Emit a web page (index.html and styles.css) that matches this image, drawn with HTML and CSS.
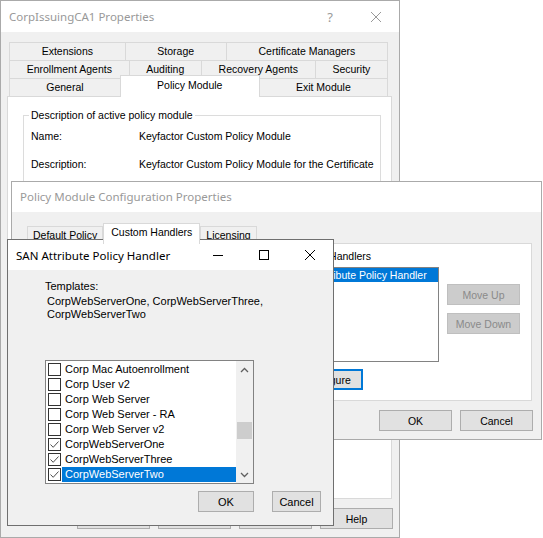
FILE: index.html
```html
<!DOCTYPE html>
<html lang="en">
<head>
  <meta charset="UTF-8">
  <title>Policy Module Configuration</title>
  <link rel="stylesheet" href="styles.css">
</head>
<body>
  <div class="desktop">

    <!-- CA properties sheet (inactive, at the back) -->
    <section class="win win-props">
      <div class="titlebar">
        <span class="title">CorpIssuingCA1 Properties</span>
        <div class="caption">
          <span class="cap-btn cap-help">?</span>
          <span class="cap-btn">
            <svg viewBox="0 0 10 10"><path d="M0 0L10 10M10 0L0 10"/></svg>
          </span>
        </div>
      </div>
      <div class="win-body">
        <div class="tab-stack">
          <div class="tab-row">
            <div class="tab">Extensions</div>
            <div class="tab">Storage</div>
            <div class="tab">Certificate Managers</div>
          </div>
          <div class="tab-row">
            <div class="tab">Enrollment Agents</div>
            <div class="tab">Auditing</div>
            <div class="tab">Recovery Agents</div>
            <div class="tab">Security</div>
          </div>
          <div class="tab-row">
            <div class="tab">General</div>
            <div class="tab selected">Policy Module</div>
            <div class="tab">Exit Module</div>
          </div>
        </div>
        <div class="tab-panel props-panel">
          <fieldset class="group">
            <legend>Description of active policy module</legend>
            <div class="desc-grid">
              <span>Name:</span>
              <span class="desc-value">Keyfactor Custom Policy Module</span>
              <span>Description:</span>
              <span class="desc-value">Keyfactor Custom Policy Module for the Certificate</span>
            </div>
          </fieldset>
        </div>
        <div class="dlg-buttons">
          <button class="btn">OK</button>
          <button class="btn">Cancel</button>
          <button class="btn">Apply</button>
          <button class="btn">Help</button>
        </div>
      </div>
    </section>

    <!-- Policy module configuration (inactive, middle) -->
    <section class="win win-config">
      <div class="titlebar">
        <span class="title">Policy Module Configuration Properties</span>
      </div>
      <div class="win-body">
        <div class="tab-strip">
          <div class="tab">Default Policy</div>
          <div class="tab selected">Custom Handlers</div>
          <div class="tab">Licensing</div>
        </div>
        <div class="tab-panel config-panel">
          <div class="handlers">
            <div class="handlers-col">
              <span class="handlers-label">Custom Handlers</span>
              <div class="listbox handler-list">
                <div class="list-row selected">SAN Attribute Policy Handler</div>
              </div>
              <button class="btn btn-default">Configure</button>
            </div>
            <div class="move-col">
              <button class="btn" disabled>Move Up</button>
              <button class="btn" disabled>Move Down</button>
            </div>
          </div>
        </div>
        <div class="dlg-buttons">
          <button class="btn">OK</button>
          <button class="btn">Cancel</button>
        </div>
      </div>
    </section>

    <!-- SAN handler (active, in front) -->
    <section class="win win-san">
      <div class="titlebar">
        <span class="title">SAN Attribute Policy Handler</span>
        <div class="caption">
          <span class="cap-btn">
            <svg viewBox="0 0 10 10"><path d="M0 5.5H10"/></svg>
          </span>
          <span class="cap-btn">
            <svg viewBox="0 0 10 10"><rect x="0.5" y="0.5" width="9" height="9"/></svg>
          </span>
          <span class="cap-btn">
            <svg viewBox="0 0 10 10"><path d="M0 0L10 10M10 0L0 10"/></svg>
          </span>
        </div>
      </div>
      <div class="win-body">
        <div class="templates">
          <div>Templates:</div>
          <div class="template-names">CorpWebServerOne, CorpWebServerThree,<br>CorpWebServerTwo</div>
        </div>
        <div class="listbox check-list">
          <div class="check-items">
            <div class="check-item"><span class="check-box"></span><span class="check-label">Corp Mac Autoenrollment</span></div>
            <div class="check-item"><span class="check-box"></span><span class="check-label">Corp User v2</span></div>
            <div class="check-item"><span class="check-box"></span><span class="check-label">Corp Web Server</span></div>
            <div class="check-item"><span class="check-box"></span><span class="check-label">Corp Web Server - RA</span></div>
            <div class="check-item"><span class="check-box"></span><span class="check-label">Corp Web Server v2</span></div>
            <div class="check-item checked"><span class="check-box"><svg viewBox="0 0 11 11"><path d="M1.5 5.5L4.2 8.3L9.5 2.5"/></svg></span><span class="check-label">CorpWebServerOne</span></div>
            <div class="check-item checked"><span class="check-box"><svg viewBox="0 0 11 11"><path d="M1.5 5.5L4.2 8.3L9.5 2.5"/></svg></span><span class="check-label">CorpWebServerThree</span></div>
            <div class="check-item checked selected"><span class="check-box"><svg viewBox="0 0 11 11"><path d="M1.5 5.5L4.2 8.3L9.5 2.5"/></svg></span><span class="check-label">CorpWebServerTwo</span></div>
          </div>
          <div class="scrollbar">
            <span class="arrow"><svg viewBox="0 0 9 6"><path d="M1 5L4.5 1.5L8 5"/></svg></span>
            <div class="track"><span class="thumb"></span></div>
            <span class="arrow"><svg viewBox="0 0 9 6"><path d="M1 1L4.5 4.5L8 1"/></svg></span>
          </div>
        </div>
        <div class="san-buttons">
          <button class="btn btn-ok">OK</button>
          <button class="btn btn-cancel">Cancel</button>
        </div>
      </div>
    </section>

  </div>
</body>
</html>
```

FILE: styles.css
```css
/* General */
* {
  box-sizing: border-box;
}

body {
  margin: 0;
  background: #fff;
  font-family: 'Liberation Sans', Arial, sans-serif;
  font-size: 10.5px;
  color: #000;
}

.desktop {
  position: relative;
  width: 543px;
  height: 538px;
  overflow: hidden;
}

/* Windows */
.win {
  position: absolute;
  display: flex;
  flex-direction: column;
  background: #f0f0f0;
  border: 1px solid #aaaaaa;
}

.win-props {
  left: 0;
  top: 0;
  width: 400px;
  height: 538px;
}

.win-config {
  left: 11px;
  top: 181px;
  width: 531px;
  height: 259px;
}

.win-san {
  left: 7px;
  top: 239px;
  width: 327px;
  height: 287px;
  border-color: #6f6f6f;
  font-size: 11px;
}

.titlebar {
  display: flex;
  align-items: center;
  flex: none;
  height: 30px;
  background: #fff;
}

.win-props .titlebar {
  height: 31px;
}

.title {
  flex: 1;
  padding-left: 8px;
  font-family: 'Noto Sans', sans-serif;
  font-size: 11.5px;
  color: #999;
  white-space: nowrap;
}

.win-config .title {
  padding-bottom: 2px;
}

.win-san .title {
  color: #000;
}

.caption {
  display: flex;
  align-self: stretch;
}

.cap-btn {
  display: flex;
  align-items: center;
  justify-content: center;
  width: 46px;
  color: #000;
}

.win-props .cap-btn {
  color: #999;
}

.cap-help {
  font-family: 'Noto Sans', sans-serif;
  font-size: 13px;
}

.cap-btn svg {
  width: 10px;
  height: 10px;
  fill: none;
  stroke: currentColor;
  stroke-width: 1;
}

.win-body {
  flex: 1;
}

/* Tabs */
.tab {
  background: #f0f0f0;
  border: 1px solid #d9d9d9;
  border-bottom: none;
  text-align: center;
  white-space: nowrap;
}

.tab.selected {
  position: relative;
  z-index: 1;
  background: #fff;
  margin-bottom: -1px;
}

.tab-panel {
  background: #fff;
  border: 1px solid #d9d9d9;
}

/* Buttons */
.btn {
  height: 21px;
  width: 73px;
  padding: 0;
  background: #e1e1e1;
  border: 1px solid #adadad;
  font: inherit;
  color: #000;
  text-align: center;
}

.btn:disabled {
  background: #cccccc;
  border-color: #bfbfbf;
  color: #8a8a8a;
}

.btn-default {
  border-color: #0078d7;
  box-shadow: inset 0 0 0 1px #0078d7;
}

.dlg-buttons {
  display: flex;
  justify-content: flex-end;
  gap: 8px;
  margin-top: 9px;
}

/* CA properties sheet */
.win-props .win-body {
  padding: 10px 6px 0 6px;
}

.tab-stack {
  width: 379px;
  margin-left: 2px;
}

.tab-row {
  display: flex;
  align-items: flex-end;
  height: 18px;
}

.tab-row .tab {
  flex: 1 1 auto;
  height: 18px;
  margin-left: -1px;
  padding: 0 4px;
  line-height: 17px;
}

.tab-row .tab:first-child {
  margin-left: 0;
}

.tab-row .tab.selected {
  height: 22px;
  line-height: 19px;
}

.props-panel {
  width: 385px;
  height: 403px;
}

.group {
  width: 356px;
  height: 160px;
  margin: 12px 0 0 15px;
  padding: 8px 6px 0 7px;
  border: 1px solid #dcdcdc;
}

.group legend {
  margin-left: -2px;
  padding: 0 2px;
  line-height: 13px;
}

.desc-grid {
  display: grid;
  grid-template-columns: 108px 1fr;
  row-gap: 15px;
  line-height: 13px;
}

.desc-value {
  white-space: nowrap;
}

/* Configuration properties */
.win-config .win-body {
  padding: 12px 8px 0 11px;
}

.tab-strip {
  display: flex;
  align-items: flex-end;
  height: 19px;
  margin-left: 4px;
}

.tab-strip .tab {
  height: 17px;
  padding: 0 5px;
  line-height: 16px;
}

.tab-strip .tab.selected {
  height: 21px;
  padding: 0 7px;
  line-height: 17px;
}

.config-panel {
  width: 509px;
  height: 158px;
}

.handlers {
  display: flex;
  gap: 8px;
  padding: 6px 0 0 266px;
}

.handlers-col {
  display: flex;
  flex-direction: column;
  width: 149px;
}

.handlers-label {
  line-height: 13px;
}

.listbox {
  background: #fff;
  border: 1px solid #828282;
}

.handler-list {
  height: 95px;
  margin-top: 4px;
}

.list-row {
  height: 14px;
  padding-left: 2px;
  line-height: 14px;
  white-space: nowrap;
}

.selected > .check-label,
.list-row.selected {
  background: #0078d7;
  color: #fff;
}

.handlers-col .btn {
  width: 70px;
  margin: 7px 0 0 3px;
}

.move-col {
  display: flex;
  flex-direction: column;
  gap: 8px;
  margin-top: 34px;
}

/* SAN handler */
.win-san .win-body {
  padding: 10px 12px 0 37px;
}

.templates {
  line-height: 13px;
}

.template-names {
  margin-top: 2px;
  padding-left: 2px;
}

.check-list {
  display: flex;
  width: 209px;
  height: 124px;
  margin-top: 39px;
}

.check-items {
  flex: 1;
  padding-top: 1px;
}

.check-item {
  display: flex;
  align-items: center;
  height: 15px;
}

.check-box {
  display: flex;
  align-items: center;
  justify-content: center;
  width: 13px;
  height: 13px;
  margin: 0 1px 0 2px;
  background: #fff;
  border: 1px solid #333;
}

.check-box svg {
  width: 11px;
  height: 11px;
  fill: none;
  stroke: #4d4d4d;
  stroke-width: 1;
}

.check-label {
  flex: 1;
  height: 15px;
  padding-left: 3px;
  line-height: 15px;
  white-space: nowrap;
}

.scrollbar {
  display: flex;
  flex-direction: column;
  width: 17px;
  background: #f0f0f0;
}

.arrow {
  display: flex;
  align-items: center;
  justify-content: center;
  height: 17px;
}

.arrow svg {
  width: 9px;
  height: 6px;
  fill: none;
  stroke: #606060;
  stroke-width: 1.3;
}

.track {
  flex: 1;
  padding-top: 44px;
}

.thumb {
  display: block;
  width: 15px;
  height: 17px;
  margin-left: 1px;
  background: #cdcdcd;
}

.san-buttons {
  display: flex;
  justify-content: flex-end;
  gap: 18px;
  margin-top: 7px;
}

.btn-ok {
  width: 56px;
}

.btn-cancel {
  width: 49px;
}
```
